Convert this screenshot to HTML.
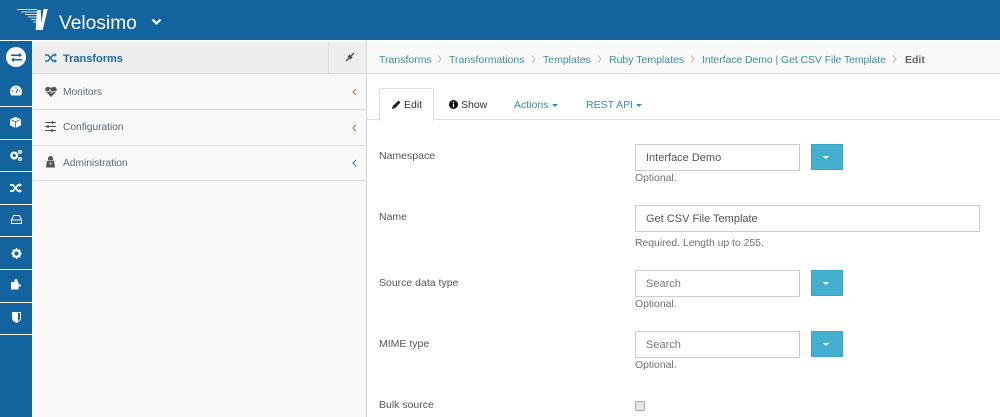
<!DOCTYPE html>
<html><head><meta charset="utf-8"><style>
html,body{margin:0;padding:0;background:#fff;width:1000px;height:417px;overflow:hidden}
body{position:relative;font-family:"Liberation Sans",sans-serif;font-size:11px;color:#555}
.a{position:absolute}
.t{position:absolute;white-space:nowrap;line-height:14px}
.l{position:absolute;background:#fff;left:0;width:32px;height:1px}
.hr{position:absolute;background:#ddd;height:1px}
.bc{color:#3f8cab;top:53px;font-size:10.5px}
.sep{position:absolute;top:55px}
.lab{left:379px;color:#555;font-size:10.5px}
.inp{position:absolute;left:635px;width:163px;height:25px;border:1px solid #ccc;background:#fff;font-size:11px;line-height:27px;text-indent:10px;color:#555}
.btn{position:absolute;left:811px;width:32px;height:26px;background:#44afcf;border:1px solid #3ca5c4;box-sizing:border-box}
.btn:after{content:"";position:absolute;left:11px;top:11px;border-left:3px solid transparent;border-right:3px solid transparent;border-top:3px solid #fff}
.help{left:635px;color:#6f6f6f;font-size:10.4px}
.tab{font-size:10.5px;top:98px}
.nav{left:63px;color:#5c6770;font-size:10.2px}
svg{position:absolute;overflow:visible}
</style></head><body>
<div class="a" style="left:0;top:0;width:1000px;height:40px;background:#13639e"></div>
<svg style="left:16px;top:8px" width="36" height="24" viewBox="0 0 36 24"><path d="M1 1.500H21M5 4H21M9 6.500H21.500M12 9H21.500M15 11.500H21.500M17 14H21.500" stroke="#fff" stroke-width="1" opacity=".8"/><path d="M21 2h3.700l.8 13L27.500 1h4.200L26.700 22h-7z" fill="#fff"/></svg>
<div class="t" style="left:59px;top:12px;font-size:19.2px;line-height:24px;color:#fff">Velosimo</div>
<svg style="left:151px;top:18px" width="11" height="8"><path d="M1.500 1.500L5.500 5.500L9.500 1.500" fill="none" stroke="#fff" stroke-width="2.200"/></svg>

<div class="a" style="left:0;top:40px;width:32px;height:377px;background:#13639e"></div>
<div class="l" style="top:40px"></div><div class="l" style="top:106px"></div><div class="l" style="top:139px"></div><div class="l" style="top:171px"></div><div class="l" style="top:204px"></div><div class="l" style="top:236px"></div><div class="l" style="top:269px"></div><div class="l" style="top:302px"></div><div class="l" style="top:334px"></div>
<div class="a" style="left:6px;top:47px;width:20px;height:20px;border-radius:50%;background:#fff"></div>
<svg style="left:11px;top:53px" width="11" height="9"><path d="M0 2.200H8.500M2 6.800H11" stroke="#13639e" stroke-width="1.500"/><path d="M8 0L11 2.200L8 4.400zM3 4.600L0 6.800L3 9z" fill="#13639e"/></svg>
<svg style="left:10px;top:85px" width="12" height="11"><path d="M1.400 10.500A6 6 0 1 1 10.600 10.500z" fill="#fff"/><path d="M6 8L8 4" stroke="#13639e" stroke-width="1.100"/><circle cx="2.500" cy="6" r=".7" fill="#13639e"/><circle cx="6" cy="3" r=".7" fill="#13639e"/><circle cx="9.500" cy="6" r=".7" fill="#13639e"/></svg>
<svg style="left:10px;top:117px" width="11" height="11"><path d="M5.500 0L11 2.200V8.500L5.500 11L0 8.500V2.200z" fill="#fff"/><path d="M5.500 4.800V11M1 2.700L5.500 4.800L10 2.700" stroke="#13639e" stroke-width=".8" fill="none"/></svg>
<svg style="left:10px;top:150px" width="13" height="11"><circle cx="4.200" cy="5.500" r="2.800" fill="none" stroke="#fff" stroke-width="2.400"/><circle cx="10" cy="2" r="1.400" fill="none" stroke="#fff" stroke-width="1.300"/><circle cx="10" cy="9" r="1.400" fill="none" stroke="#fff" stroke-width="1.300"/></svg>
<svg style="left:10px;top:183px" width="12" height="10"><path d="M0 2H3L8 8H10M0 8H3L8 2H10" fill="none" stroke="#fff" stroke-width="1.700"/><path d="M9.500 0L12 2L9.500 4zM9.500 6L12 8L9.500 10z" fill="#fff"/></svg>
<svg style="left:11px;top:215px" width="11" height="9"><path d="M2.500 .5H8.500L10.500 5V8.500H.5V5z" fill="none" stroke="#fff" stroke-width="1"/><path d="M.5 5H10.500" stroke="#fff" stroke-width="1"/></svg>
<svg style="left:11px;top:248px" width="11" height="11"><circle cx="5.500" cy="5.500" r="3.300" fill="none" stroke="#fff" stroke-width="2.400"/><path d="M5.500 0V11M0 5.500H11M1.700 1.700L9.300 9.300M9.300 1.700L1.700 9.300" stroke="#fff" stroke-width="1.300" stroke-dasharray="2 7 2 0"/></svg>
<svg style="left:10px;top:279px" width="12" height="11"><path d="M1 3H4.500V1.500a1.500 1.500 0 0 1 3 0V3H8.500V5.500H11V7.500H8.500V10.500H1z" fill="#fff"/></svg>
<svg style="left:12px;top:312px" width="9" height="11"><path d="M0 0H9V6C9 8.500 6.500 10 4.500 11C2.500 10 0 8.500 0 6z" fill="#fff"/><path d="M6 1H8V6C8 7.500 7 8.500 6 9.200z" fill="#13639e"/></svg>

<div class="a" style="left:32px;top:42px;width:334px;height:375px;background:#f9f9f9"></div>
<div class="a" style="left:32px;top:42px;width:334px;height:31px;background:#eee"></div>
<div class="a" style="left:328px;top:42px;width:1px;height:31px;background:#ddd"></div>
<div class="hr" style="left:32px;top:73px;width:335px;background:#d8d8d8"></div>
<div class="hr" style="left:32px;top:109px;width:334px"></div>
<div class="hr" style="left:32px;top:145px;width:334px"></div>
<div class="hr" style="left:32px;top:180px;width:334px"></div>
<div class="a" style="left:366px;top:40px;width:1px;height:377px;background:#d5d5d5"></div>
<svg style="left:45px;top:53px" width="12" height="10"><path d="M0 2H3L8 8H10M0 8H3L8 2H10" fill="none" stroke="#1f6fa8" stroke-width="1.500"/><path d="M9.500 0L12 2L9.500 4zM9.500 6L12 8L9.500 10z" fill="#1f6fa8"/></svg>
<div class="t" style="left:63px;top:52px;font-weight:bold;color:#1f6aa5;font-size:11px">Transforms</div>
<svg style="left:346px;top:53px" width="8" height="8"><path d="M0 8L3 5M8 0L5 3" stroke="#555" stroke-width="1.500"/><path d="M2 3L5 6M3 2L6 5" stroke="#444" stroke-width="1.400"/></svg>
<svg style="left:45px;top:86px" width="12" height="11"><path d="M6 11L.8 5.500C-1 2.500 2 -1 6 2C10 -1 13 2.500 11.200 5.500z" fill="#555"/><path d="M1 5.500H4L5 3.500L6.500 7L7.500 5.500H11" stroke="#f9f9f9" stroke-width=".8" fill="none"/></svg>
<div class="t nav" style="top:86px">Monitors</div>
<svg style="left:45px;top:121px" width="11" height="11"><path d="M0 1.500H11M0 5.500H11M0 9.500H11" stroke="#555" stroke-width="1"/><path d="M7.500 0V3M3 4V7M7 8V11" stroke="#555" stroke-width="1.500"/></svg>
<div class="t nav" style="top:121px">Configuration</div>
<svg style="left:46px;top:156px" width="9" height="12"><path d="M2 4.500V2.500a2.500 2.500 0 0 1 5 0v2z" fill="#555"/><path d="M1 5H8L9 11.500H0z" fill="#555"/><circle cx="4.500" cy="7.500" r="1.200" fill="#c9b48a"/></svg>
<div class="t nav" style="top:157px">Administration</div>
<svg style="left:352px;top:88px" width="5" height="8"><path d="M4 1L1 4L4 7" fill="none" stroke="#a5794f" stroke-width="1.100"/></svg>
<svg style="left:352px;top:124px" width="5" height="8"><path d="M4 1L1 4L4 7" fill="none" stroke="#8a8450" stroke-width="1.100"/></svg>
<svg style="left:352px;top:159px" width="5" height="8"><path d="M4 1L1 4L4 7" fill="none" stroke="#4f83a8" stroke-width="1.100"/></svg>

<div class="a" style="left:367px;top:42px;width:633px;height:31px;background:#f9f9f9"></div>
<div class="hr" style="left:367px;top:73px;width:633px;background:#d8d8d8"></div>
<div class="t bc" style="left:379px">Transforms</div>
<div class="t bc" style="left:449px">Transformations</div>
<div class="t bc" style="left:543px">Templates</div>
<div class="t bc" style="left:609px">Ruby Templates</div>
<div class="t bc" style="left:702px;letter-spacing:-.08px">Interface Demo | Get CSV File Template</div>
<div class="t" style="left:905px;top:53px;font-weight:bold;color:#666;font-size:10.5px">Edit</div>
<svg class="sep" style="left:437px" width="5" height="8"><path d="M1 .5L4 4L1 7.500" fill="none" stroke="#bbb"/></svg>
<svg class="sep" style="left:531px" width="5" height="8"><path d="M1 .5L4 4L1 7.500" fill="none" stroke="#bbb"/></svg>
<svg class="sep" style="left:597px" width="5" height="8"><path d="M1 .5L4 4L1 7.500" fill="none" stroke="#bbb"/></svg>
<svg class="sep" style="left:690px" width="5" height="8"><path d="M1 .5L4 4L1 7.500" fill="none" stroke="#bbb"/></svg>
<svg class="sep" style="left:892px" width="5" height="8"><path d="M1 .5L4 4L1 7.500" fill="none" stroke="#bbb"/></svg>

<div class="hr" style="left:367px;top:119px;width:633px"></div>
<div class="a" style="left:379px;top:88px;width:53px;height:32px;background:#fff;border:1px solid #ddd;border-bottom:0;border-radius:2px 2px 0 0"></div>
<svg style="left:392px;top:100px" width="9" height="9"><path d="M0 9L.8 6L6.500 .5L8.500 2.500L3 8.200z" fill="#222"/></svg>
<div class="t tab" style="left:404px;color:#333">Edit</div>
<svg style="left:449px;top:100px" width="9" height="9"><circle cx="4.500" cy="4.500" r="4.500" fill="#111"/><path d="M4.500 1.800V3M4.500 3.800V7.200" stroke="#fff" stroke-width="1.200"/></svg>
<div class="t tab" style="left:461px;color:#333">Show</div>
<div class="t tab" style="left:514px;color:#2f8fb5">Actions</div>
<div class="a" style="left:552px;top:104px;border-left:3.500px solid transparent;border-right:3.500px solid transparent;border-top:3.500px solid #2f8fb5"></div>
<div class="t tab" style="left:586px;color:#2f8fb5">REST API</div>
<div class="a" style="left:636px;top:104px;border-left:3.500px solid transparent;border-right:3.500px solid transparent;border-top:3.500px solid #2f8fb5"></div>

<div class="t lab" style="top:149px">Namespace</div>
<div class="inp" style="top:144px">Interface Demo</div>
<div class="btn" style="top:144px"></div>
<div class="t help" style="top:172px">Optional.</div>

<div class="t lab" style="top:210px">Name</div>
<div class="inp" style="top:205px;width:343px">Get CSV File Template</div>
<div class="t help" style="top:237px">Required. Length up to 255.</div>

<div class="t lab" style="top:276px">Source data type</div>
<div class="inp" style="top:270px;color:#777">Search</div>
<div class="btn" style="top:270px"></div>
<div class="t help" style="top:298px">Optional.</div>

<div class="t lab" style="top:337px">MIME type</div>
<div class="inp" style="top:331px;color:#777">Search</div>
<div class="btn" style="top:331px"></div>
<div class="t help" style="top:359px">Optional.</div>

<div class="t lab" style="top:398px">Bulk source</div>
<div class="a" style="left:635px;top:401px;width:8px;height:8px;background:#e6e6e6;border:1px solid #aaa;border-radius:2px"></div>
</body></html>
